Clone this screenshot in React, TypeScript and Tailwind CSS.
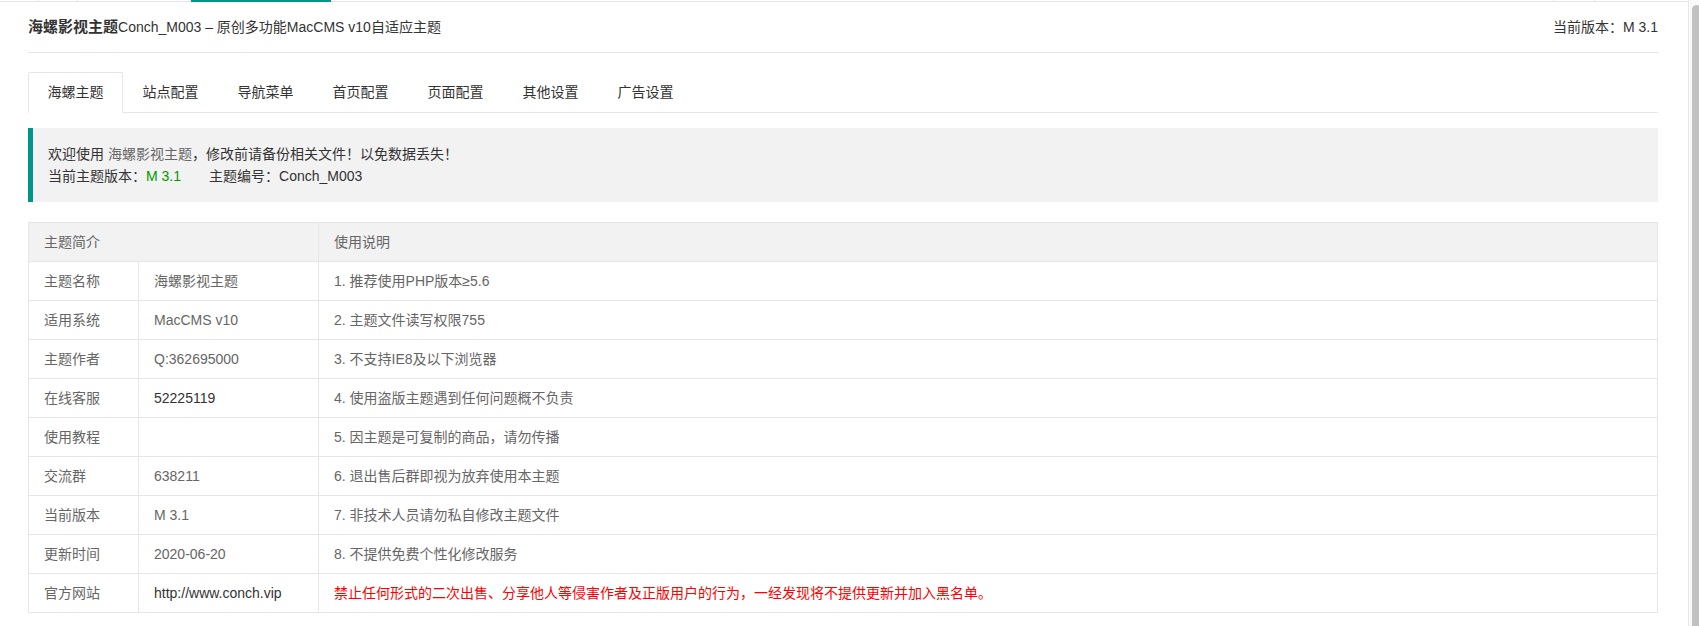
import React from "react";

const rows: { label: string; value: string; dark?: boolean; note: string; red?: boolean }[] = [
  { label: "主题名称", value: "海螺影视主题", note: "1. 推荐使用PHP版本≥5.6" },
  { label: "适用系统", value: "MacCMS v10", note: "2. 主题文件读写权限755" },
  { label: "主题作者", value: "Q:362695000", note: "3. 不支持IE8及以下浏览器" },
  { label: "在线客服", value: "52225119", dark: true, note: "4. 使用盗版主题遇到任何问题概不负责" },
  { label: "使用教程", value: "", note: "5. 因主题是可复制的商品，请勿传播" },
  { label: "交流群", value: "638211", note: "6. 退出售后群即视为放弃使用本主题" },
  { label: "当前版本", value: "M 3.1", note: "7. 非技术人员请勿私自修改主题文件" },
  { label: "更新时间", value: "2020-06-20", note: "8. 不提供免费个性化修改服务" },
  {
    label: "官方网站",
    value: "http://www.conch.vip",
    dark: true,
    note: "禁止任何形式的二次出售、分享他人等侵害作者及正版用户的行为，一经发现将不提供更新并加入黑名单。",
    red: true,
  },
];

const tabs = ["海螺主题", "站点配置", "导航菜单", "首页配置", "页面配置", "其他设置", "广告设置"];

export default function App() {
  return (
    <div
      className="flex h-[626px] w-[1699px] overflow-hidden bg-white text-[14px] text-[#333]"
      style={{ fontFamily: '"Liberation Sans", "Noto Sans CJK SC", sans-serif' }}
    >
      <div className="flex min-w-0 flex-1 flex-col">
        {/* remains of the outer tab bar */}
        <div className="flex h-[2px] items-start border-b border-[#e6e6e6]">
          <div className="w-[38px]" />
          <div className="h-px w-px bg-[#e6e6e6]" />
          <div className="w-[38px]" />
          <div className="h-px w-px bg-[#e6e6e6]" />
          <div className="w-[113px]" />
          <div className="h-[2px] w-[140px] bg-[#009688]" />
          <div className="flex-1" />
          <div className="h-px w-px bg-[#e6e6e6]" />
          <div className="w-[40px]" />
          <div className="h-px w-px bg-[#e6e6e6]" />
          <div className="w-[93px]" />
        </div>

        <div className="flex flex-col pl-[28px] pr-[30px]">
          <div className="flex items-center justify-between border-b border-[#e6e6e6] pt-[15px] pb-[15px] leading-5">
            <div>
              <span className="text-[15px] font-bold">海螺影视主题</span>
              Conch_M003 – 原创多功能MacCMS v10自适应主题
            </div>
            <div>当前版本：M 3.1</div>
          </div>

          <ul className="mt-[19px] flex h-[41px] border-b border-[#e6e6e6]">
            {tabs.map((t, i) => (
              <li
                key={t}
                className={
                  i === 0
                    ? "h-[41px] w-[95px] rounded-t-[2px] border border-[#e6e6e6] border-b-white bg-white text-center leading-[39px]"
                    : "h-[40px] w-[95px] border border-transparent text-center leading-[39px]"
                }
              >
                {t}
              </li>
            ))}
          </ul>

          <div className="mt-[15px] border-l-[5px] border-[#009688] bg-[#f2f2f2] px-[15px] py-[15px] leading-[22px]">
            <p>
              欢迎使用 <span className="text-[#666]">海螺影视主题</span>，修改前请备份相关文件！以免数据丢失！
            </p>
            <p>
              当前主题版本：<span className="text-[#009900]">M 3.1</span>
              <span className="ml-[28px]">主题编号：Conch_M003</span>
            </p>
          </div>

          <table className="mt-[20px] w-full border-collapse text-[#666]">
            <colgroup>
              <col className="w-[110px]" />
              <col className="w-[180px]" />
              <col />
            </colgroup>
            <thead>
              <tr className="bg-[#f2f2f2]">
                <th colSpan={2} className="border border-[#e6e6e6] px-[15px] py-[9px] text-left font-normal leading-5">
                  主题简介
                </th>
                <th className="border border-[#e6e6e6] px-[15px] py-[9px] text-left font-normal leading-5">使用说明</th>
              </tr>
            </thead>
            <tbody>
              {rows.map((r) => (
                <tr key={r.label}>
                  <td className="border border-[#e6e6e6] px-[15px] py-[9px] leading-5">{r.label}</td>
                  <td className={`border border-[#e6e6e6] px-[15px] py-[9px] leading-5 ${r.dark ? "text-[#333]" : ""}`}>
                    {r.value}
                  </td>
                  <td className={`border border-[#e6e6e6] px-[15px] py-[9px] leading-5 ${r.red ? "text-[#ff0000]" : ""}`}>
                    {r.note}
                  </td>
                </tr>
              ))}
            </tbody>
          </table>
        </div>
      </div>

      {/* scrollbar */}
      <div className="flex w-[11px] flex-col border-l border-[#e8e8e8] bg-[#fafafa] pt-[5px] pl-[3px]">
        <div className="w-[9px] flex-1 rounded-t-full bg-[#c1c1c1]" />
      </div>
    </div>
  );
}
